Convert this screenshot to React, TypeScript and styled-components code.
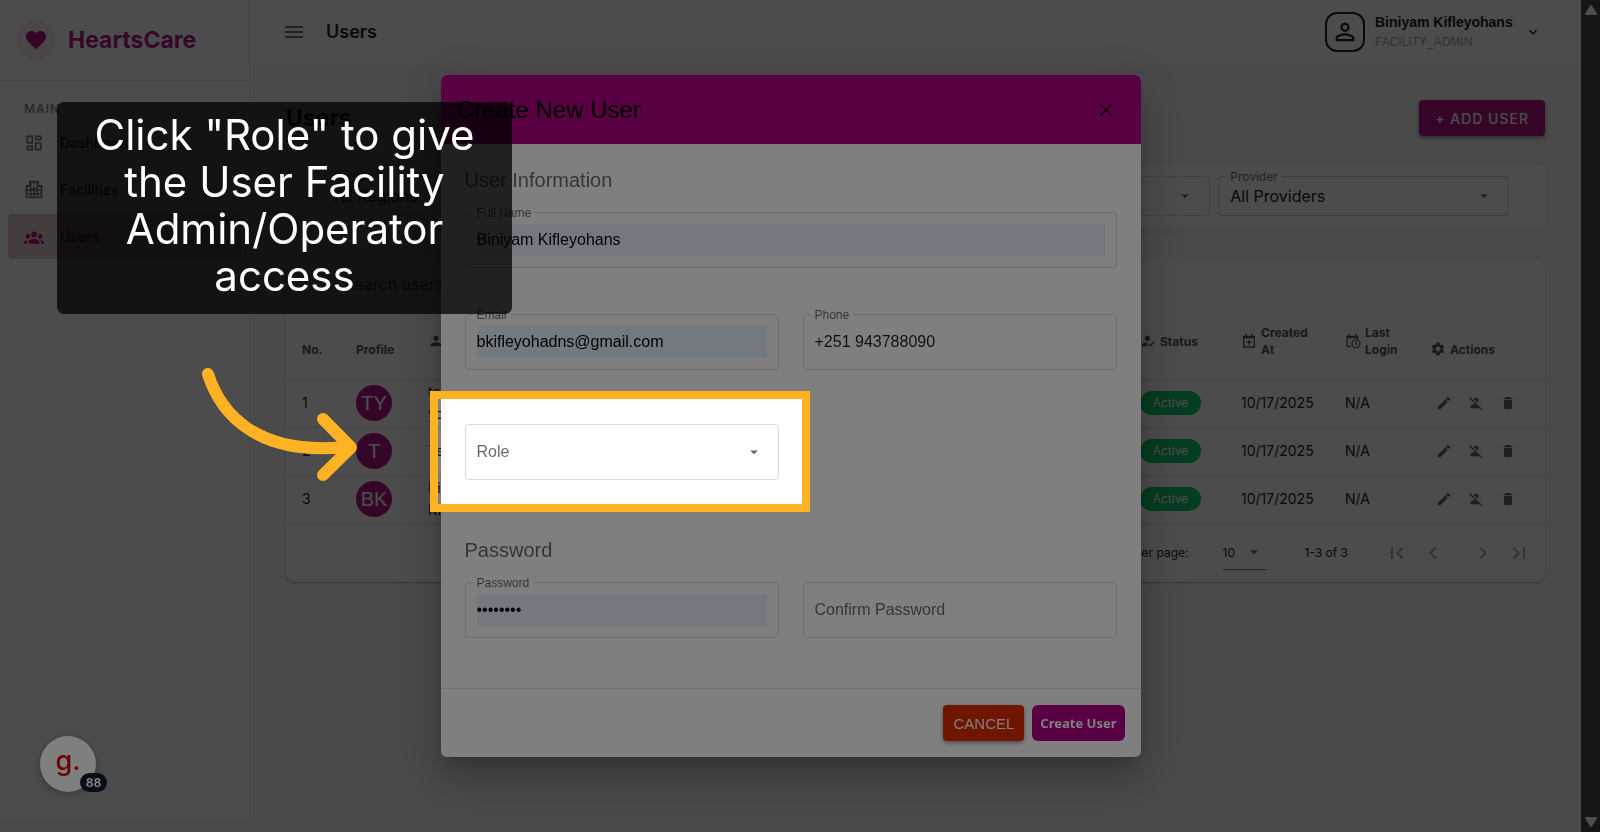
import React from "react";
import styled, { createGlobalStyle } from "styled-components";
import {
  MdArrowDropDown,
  MdChevronLeft,
  MdChevronRight,
  MdDelete,
  MdEdit,
  MdFavorite,
  MdFirstPage,
  MdHowToReg,
  MdKeyboardArrowDown,
  MdLastPage,
  MdMenu,
  MdOutlineDashboard,
  MdPerson,
  MdPersonOff,
  MdPersonOutline,
  MdSettings,
} from "react-icons/md";

const brand = "#b5178a";
const accent = "#b20084";
const tour = "#ffb224";
const ui = `Inter, "Open Sans", sans-serif`;
const arial = `"Liberation Sans", Arial, sans-serif`;

const Global = createGlobalStyle`
  *, *::before, *::after { box-sizing: border-box; }
  body { margin: 0; background: #f8f8f8; font-family: ${ui}; color: #222; overflow: hidden; }
  button, input, select { font: inherit; color: inherit; border: 0; background: none; padding: 0; margin: 0; outline: 0; }
  h1, h2, h3, p { margin: 0; }
`;

/* ---------- page frame ---------- */

const Shell = styled.div`
  display: flex;
  height: 100vh;
`;

const Sidebar = styled.aside`
  flex: none;
  width: 250px;
  margin-bottom: 12px;
  background: #fff;
  border-right: 1px solid #e4e4e4;
`;

const Brand = styled.div`
  display: flex;
  align-items: center;
  gap: 12px;
  height: 81px;
  padding: 0 16px;
  border-bottom: 1px solid #e4e4e4;
  color: ${brand};
  font-size: 23px;
  font-weight: 700;
`;

const BrandMark = styled.span`
  display: grid;
  place-items: center;
  width: 40px;
  height: 40px;
  border-radius: 50%;
  background: #f8e6ea;
`;

const NavTitle = styled.h2`
  padding: 20px 24px 3px;
  font-size: 12px;
  line-height: 16px;
  font-weight: 600;
  letter-spacing: 1px;
  color: #8a8a8a;
`;

const Nav = styled.nav`
  display: flex;
  flex-direction: column;
  gap: 2px;
  padding: 0 8px;
`;

const NavLink = styled.a<{ $active?: boolean }>`
  display: flex;
  align-items: center;
  gap: 16px;
  height: 45px;
  padding: 0 16px;
  border-radius: 4px;
  font-size: 14px;
  font-weight: ${(p) => (p.$active ? 600 : 500)};
  text-decoration: none;
  color: ${(p) => (p.$active ? brand : "#333")};
  background: ${(p) => (p.$active ? "#e3cbd0" : "transparent")};
  svg { flex: none; width: 20px; height: 20px; color: ${(p) => (p.$active ? brand : "#777")}; }
`;

const Main = styled.main`
  flex: 1;
  min-width: 0;
`;

const TopBar = styled.header`
  display: flex;
  align-items: center;
  height: 65px;
  padding: 0 40px 2px 32px;
  background: #fff;
`;

const IconButton = styled.button`
  display: inline-grid;
  place-items: center;
  color: inherit;
`;

const TopTitle = styled.p`
  flex: 1;
  padding-left: 20px;
  font-size: 18px;
  font-weight: 600;
`;

const Account = styled.button`
  display: flex;
  align-items: center;
  text-align: left;
  font-family: ${arial};
`;

const AccountFrame = styled.span`
  display: grid;
  place-items: center;
  width: 40px;
  height: 40px;
  margin-right: 10px;
  border: 2px solid #222;
  border-radius: 12px;
`;

const AccountText = styled.span`
  display: flex;
  flex-direction: column;
  width: 150px;
  font-size: 12px;
  line-height: 20px;
  color: #a8a8a8;
  strong { font-size: 14px; color: #222; }
`;

const Scrollbar = styled.div`
  flex: none;
  display: flex;
  flex-direction: column;
  justify-content: space-between;
  align-items: center;
  width: 19px;
  padding: 5px 0;
  background: #2c2c2c;
`;

/* ---------- users page ---------- */

const Content = styled.div`
  padding: 35px 36px 0;
`;

const PageHead = styled.div`
  display: flex;
  align-items: center;
  justify-content: space-between;
  h1 { font-size: 23px; font-weight: 700; }
`;

const AddButton = styled.button`
  height: 36px;
  padding: 0 16px;
  border-radius: 4px;
  background: ${brand};
  color: #fff;
  font-size: 14px;
  font-weight: 500;
  letter-spacing: 1px;
  box-shadow: 0 2px 4px rgba(0, 0, 0, 0.4);
`;

const Filters = styled.section`
  display: grid;
  grid-template-columns: repeat(4, 1fr);
  gap: 8px;
  margin-top: 28px;
  padding: 12px 36px;
  border-radius: 8px;
  background: #fff;
  box-shadow: 0 2px 10px rgba(0, 0, 0, 0.06);
`;

const Outline = styled.div<{ $h: number }>`
  position: relative;
  display: flex;
  align-items: center;
  height: ${(p) => p.$h}px;
  padding: 0 11px;
  border: 1px solid rgba(0, 0, 0, 0.14);
  border-radius: 4px;
  > svg { flex: none; margin-right: 4px; color: #666; }
`;

const FloatLabel = styled.label`
  position: absolute;
  top: -8px;
  left: 7px;
  padding: 0 4px;
  background: #fff;
  font-size: 12px;
  line-height: 16px;
  color: rgba(0, 0, 0, 0.6);
`;

const Select = styled.select<{ $muted?: boolean }>`
  appearance: none;
  flex: 1;
  min-width: 0;
  font-size: 16px;
  line-height: 24px;
  color: ${(p) => (p.$muted ? "rgba(0, 0, 0, 0.6)" : "#222")};
`;

const Card = styled.section`
  margin-top: 32px;
  border-radius: 8px;
  background: #fff;
  box-shadow: 0 1px 2px rgba(0, 0, 0, 0.3);
`;

const Search = styled.input`
  display: block;
  width: 100%;
  height: 60px;
  padding: 0 58px 12px;
  font-size: 16px;
  &::placeholder { color: #555; opacity: 1; }
`;

const Table = styled.table`
  width: 100%;
  table-layout: fixed;
  border-collapse: collapse;
  font-size: 14px;
  line-height: 22px;
`;

const Th = styled.th<{ $w?: number; $sortable?: boolean }>`
  width: ${(p) => (p.$w ? `${p.$w}px` : "auto")};
  height: 59px;
  padding: 0 0 ${(p) => (p.$sortable ? 16 : 0)}px 16px;
  border-bottom: 1px solid #e2e2e2;
  text-align: left;
  font-size: 12px;
  line-height: 17px;
  font-weight: 700;
  color: #555;
  > span { display: flex; align-items: center; gap: 4px; }
  svg { flex: none; }
`;

const Td = styled.td`
  height: 48px;
  padding: 0 0 0 16px;
  border-bottom: 1px solid #e2e2e2;
`;

const Avatar = styled.span`
  display: grid;
  place-items: center;
  width: 36px;
  height: 36px;
  border-radius: 50%;
  background: ${brand};
  color: #fff;
  font-family: ${arial};
  font-size: 20px;
`;

const Chip = styled.span`
  display: block;
  width: 61px;
  height: 24px;
  border-radius: 12px;
  background: #10cc72;
  color: #fff;
  font-size: 12px;
  line-height: 24px;
  text-align: center;
`;

const RowActions = styled.span`
  display: flex;
  gap: 16px;
  padding-left: 6px;
  color: #666;
`;

const Pager = styled.footer`
  display: flex;
  align-items: center;
  justify-content: flex-end;
  height: 58px;
  padding-right: 14px;
  font-size: 12px;
  label { margin-right: 34px; }
`;

const PageSize = styled.span`
  display: flex;
  align-items: center;
  width: 44px;
  height: 34px;
  margin-right: 38px;
  padding-right: 4px;
  border-bottom: 1px solid #888;
  select { appearance: none; flex: 1; min-width: 0; }
  svg { flex: none; color: #666; }
`;

const PagerButtons = styled.span`
  display: flex;
  gap: 12px;
  margin-left: 37px;
  color: #aaa;
  button:nth-child(3) { margin-left: 14px; }
`;

/* ---------- dialog ---------- */

const Backdrop = styled.div`
  position: fixed;
  inset: 0 19px 0 0;
  background: rgba(0, 0, 0, 0.4);
`;

const Modal = styled.div`
  position: fixed;
  inset: 0 19px 0 0;
  display: flex;
  align-items: center;
  justify-content: center;
  font-family: ${arial};
`;

const Dialog = styled.form`
  width: 700px;
  border-radius: 6px;
  background: #fff;
  box-shadow: 0 11px 15px -7px rgba(0, 0, 0, 0.2), 0 24px 38px 3px rgba(0, 0, 0, 0.14),
    0 9px 46px 8px rgba(0, 0, 0, 0.12);
`;

const DialogHead = styled.header`
  display: flex;
  align-items: center;
  justify-content: space-between;
  height: 69px;
  padding: 0 28px 0 16px;
  border-radius: 6px 6px 0 0;
  background: ${accent};
  h2 { font-size: 24px; font-weight: 400; color: #000; }
`;

const DialogBody = styled.div`
  display: grid;
  grid-template-columns: 1fr 1fr;
  column-gap: 24px;
  padding: 23px 24px 50px;
`;

const SectionTitle = styled.h3`
  grid-column: 1 / -1;
  margin-bottom: 19px;
  font-size: 20px;
  line-height: 26px;
  font-weight: 400;
  color: rgba(0, 0, 0, 0.6);
`;

const Cell = styled.div<{ $wide?: boolean; $after?: number }>`
  position: relative;
  grid-column: ${(p) => (p.$wide ? "1 / -1" : "auto")};
  margin-bottom: ${(p) => p.$after ?? 0}px;
`;

const TextInput = styled.input<{ $filled?: boolean }>`
  flex: 1;
  min-width: 0;
  height: 32px;
  font-size: 16px;
  color: ${(p) => (p.$filled ? "#000" : "rgba(0, 0, 0, 0.87)")};
  background: ${(p) => (p.$filled ? "#e8f0fe" : "transparent")};
  &::placeholder { color: rgba(0, 0, 0, 0.6); opacity: 1; }
`;

const DialogFoot = styled.footer`
  display: flex;
  align-items: center;
  justify-content: flex-end;
  gap: 8px;
  height: 69px;
  padding: 0 16px;
  border-top: 1px solid #dedede;
`;

const CancelButton = styled.button`
  height: 36px;
  padding: 0 10px;
  border-radius: 4px;
  background: #e02d00;
  color: #fff;
  font-size: 15px;
  box-shadow: 0 2px 4px rgba(0, 0, 0, 0.4);
`;

const SubmitButton = styled.button`
  height: 36px;
  padding: 0 8px;
  border-radius: 6px;
  background: ${accent};
  color: #fff;
  font-family: "Noto Sans", sans-serif;
  font-size: 13px;
  font-weight: 700;
`;

/* ---------- guide overlay ---------- */

const Spotlight = styled.div`
  position: absolute;
  z-index: 5;
  inset: -33px -31px -32px -35px;
  border: 8px solid ${tour};
  box-shadow: 0 0 0 4000px rgba(0, 0, 0, 0.5);
  pointer-events: none;
`;

const Tooltip = styled.p`
  position: fixed;
  top: 102px;
  left: 57px;
  width: 455px;
  padding: 9px 32px 15px;
  border-radius: 7px;
  background: rgba(0, 0, 0, 0.74);
  color: #fff;
  font-size: 42px;
  line-height: 47px;
  text-align: center;
`;

const Arrow = styled.svg`
  position: fixed;
  top: 360px;
  left: 195px;
`;

const Launcher = styled.button`
  position: fixed;
  left: 40px;
  bottom: 40px;
  width: 56px;
  height: 56px;
  padding-bottom: 6px;
  border-radius: 50%;
  background: #fff;
  color: #d40000;
  font-size: 27px;
  line-height: 44px;
  font-weight: 500;
  box-shadow: 0 2px 8px rgba(0, 0, 0, 0.3);
`;

const Count = styled.span`
  position: absolute;
  top: 37px;
  left: 40px;
  width: 27px;
  height: 19px;
  border-radius: 10px;
  background: #101c30;
  color: #fff;
  font-size: 12px;
  line-height: 19px;
  font-weight: 700;
`;

/* ---------- icons ---------- */

const HospitalIcon = () => (
  <svg viewBox="0 0 24 24" fill="currentColor" fillRule="evenodd">
    <path d="M2 22V6h4V1h12v5h4v16H2ZM9 3v7h2V7.500h2V10h2V3h-2v2.500h-2V3H9ZM4 8.500V11h3V8.500H4Zm13 0V11h3V8.500h-3ZM4 13v2.500h3V13H4Zm5 0v2.500h2V13H9Zm4 0v2.500h2V13h-2Zm4 0v2.500h3V13h-3ZM4 17.500V20h3v-2.500H4Zm5 0V20h2v-2.500H9Zm4 0V20h2v-2.500h-2Zm4 0V20h3v-2.500h-3Z" />
  </svg>
);

const GroupIcon = () => (
  <svg viewBox="0 0 24 24" fill="currentColor">
    <path d="M12,5.500A3.500,3.500 0 0,1 15.500,9A3.500,3.500 0 0,1 12,12.500A3.500,3.500 0 0,1 8.500,9A3.500,3.500 0 0,1 12,5.500M5,8C5.560,8 6.080,8.150 6.530,8.420C6.380,9.850 6.800,11.270 7.660,12.380C7.160,13.340 6.160,14 5,14A3,3 0 0,1 2,11A3,3 0 0,1 5,8M19,8A3,3 0 0,1 22,11A3,3 0 0,1 19,14C17.840,14 16.840,13.340 16.340,12.380C17.200,11.270 17.620,9.850 17.470,8.420C17.920,8.150 18.440,8 19,8M5.500,18.250C5.500,16.180 8.410,14.500 12,14.500C15.590,14.500 18.500,16.180 18.500,18.250V20H5.500V18.250M0,20V18.500C0,17.110 1.890,15.940 4.450,15.600C3.860,16.280 3.500,17.220 3.500,18.250V20H0M24,20H20.500V18.250C20.500,17.220 20.140,16.280 19.550,15.600C22.110,15.940 24,17.110 24,18.500V20Z" />
  </svg>
);

const CalendarPlusIcon = () => (
  <svg width="16" height="16" viewBox="0 0 24 24" fill="none" stroke="currentColor" strokeWidth="2">
    <path d="M4 5h16v16H4zM7.500 1v4M16.500 1v4M12 10v8M8 14h8" />
    <path d="M4 6.500h16" strokeWidth="3" />
  </svg>
);

const CalendarClockIcon = () => (
  <svg width="16" height="16" viewBox="0 0 24 24" fill="none" stroke="currentColor" strokeWidth="2">
    <path d="M9 20H3V5h16v4M6 1v4M16 1v4" />
    <path d="M3 6.500h16" strokeWidth="3" />
    <circle cx="16.500" cy="16" r="6" />
    <path d="M16.500 12.500V16l2.500 1.500" />
  </svg>
);

const CloseIcon = () => (
  <svg width="14" height="14" viewBox="0 0 14 14" fill="none" stroke="#111" strokeWidth="1.500">
    <path d="M1 1l12 12M13 1L1 13" />
  </svg>
);

const ScrollArrow = ({ down }: { down?: boolean }) => (
  <svg width="12" height="10" viewBox="0 0 12 10" fill="#9c9c9c" stroke="#9c9c9c" strokeWidth="2" strokeLinejoin="round">
    <path d={down ? "M1 1h10L6 9z" : "M1 9h10L6 1z"} />
  </svg>
);

/* ---------- data ---------- */

const users = [
  { initials: "TY", name: "test yohannes" },
  { initials: "T", name: "Test" },
  { initials: "BK", name: "Biniyam Kifleyohans" },
];

type FieldProps = { id: string; label: string; value: string; type?: string; filled?: boolean };

const Field = ({ id, label, value, type = "text", filled }: FieldProps) => (
  <Outline $h={56}>
    <FloatLabel htmlFor={id}>{label}</FloatLabel>
    <TextInput id={id} type={type} defaultValue={value} $filled={filled} />
  </Outline>
);

const Filter = ({ id, label, value }: { id: string; label?: string; value?: string }) => (
  <Outline $h={40}>
    {label && <FloatLabel htmlFor={id}>{label}</FloatLabel>}
    <Select id={id} aria-label={label ?? id}>
      <option>{value}</option>
    </Select>
    <MdArrowDropDown size={18} />
  </Outline>
);

export default function App() {
  return (
    <>
      <Global />
      <Shell>
        <Sidebar>
          <Brand>
            <BrandMark>
              <MdFavorite size={24} />
            </BrandMark>
            HeartsCare
          </Brand>
          <NavTitle>MAIN</NavTitle>
          <Nav>
            <NavLink href="#dashboard">
              <MdOutlineDashboard />
              Dashboard
            </NavLink>
            <NavLink href="#facilities">
              <HospitalIcon />
              Facilities
            </NavLink>
            <NavLink href="#users" $active>
              <GroupIcon />
              Users
            </NavLink>
          </Nav>
        </Sidebar>

        <Main>
          <TopBar>
            <IconButton aria-label="Toggle menu">
              <MdMenu size={24} color="#777" />
            </IconButton>
            <TopTitle>Users</TopTitle>
            <Account>
              <AccountFrame>
                <MdPersonOutline size={28} />
              </AccountFrame>
              <AccountText>
                <strong>Biniyam Kifleyohans</strong>
                FACILITY_ADMIN
              </AccountText>
              <MdKeyboardArrowDown size={16} />
            </Account>
          </TopBar>

          <Content>
            <PageHead>
              <h1>Users</h1>
              <AddButton>+ ADD USER</AddButton>
            </PageHead>

            <Filters>
              <Filter id="region" label="Region" value="All Regions" />
              <Filter id="zone" />
              <Filter id="facility" />
              <Filter id="provider" label="Provider" value="All Providers" />
            </Filters>

            <Card>
              <Search aria-label="Search users" placeholder="Search users..." />
              <Table>
                <thead>
                  <tr>
                    <Th $w={54}>No.</Th>
                    <Th $w={72}>Profile</Th>
                    <Th $w={90} $sortable>
                      <span>
                        <MdPerson size={16} aria-label="Name" />
                      </span>
                    </Th>
                    <Th />
                    <Th $w={101} $sortable>
                      <span>
                        <MdHowToReg size={16} />
                        Status
                      </span>
                    </Th>
                    <Th $w={104} $sortable>
                      <span>
                        <CalendarPlusIcon />
                        Created
                        <br />
                        At
                      </span>
                    </Th>
                    <Th $w={85} $sortable>
                      <span>
                        <CalendarClockIcon />
                        Last
                        <br />
                        Login
                      </span>
                    </Th>
                    <Th $w={131}>
                      <span>
                        <MdSettings size={16} />
                        Actions
                      </span>
                    </Th>
                  </tr>
                </thead>
                <tbody>
                  {users.map((u, i) => (
                    <tr key={u.initials}>
                      <Td>{i + 1}</Td>
                      <Td>
                        <Avatar>{u.initials}</Avatar>
                      </Td>
                      <Td>{u.name}</Td>
                      <Td />
                      <Td>
                        <Chip>Active</Chip>
                      </Td>
                      <Td>10/17/2025</Td>
                      <Td>N/A</Td>
                      <Td>
                        <RowActions>
                          <IconButton aria-label="Edit">
                            <MdEdit size={16} />
                          </IconButton>
                          <IconButton aria-label="Deactivate">
                            <MdPersonOff size={16} />
                          </IconButton>
                          <IconButton aria-label="Delete">
                            <MdDelete size={16} />
                          </IconButton>
                        </RowActions>
                      </Td>
                    </tr>
                  ))}
                </tbody>
              </Table>
              <Pager>
                <label htmlFor="page-size">Rows per page:</label>
                <PageSize>
                  <select id="page-size">
                    <option>10</option>
                  </select>
                  <MdArrowDropDown size={18} />
                </PageSize>
                1-3 of 3
                <PagerButtons>
                  <IconButton aria-label="First page">
                    <MdFirstPage size={24} />
                  </IconButton>
                  <IconButton aria-label="Previous page">
                    <MdChevronLeft size={24} />
                  </IconButton>
                  <IconButton aria-label="Next page">
                    <MdChevronRight size={24} />
                  </IconButton>
                  <IconButton aria-label="Last page">
                    <MdLastPage size={24} />
                  </IconButton>
                </PagerButtons>
              </Pager>
            </Card>
          </Content>
        </Main>

        <Scrollbar aria-hidden>
          <ScrollArrow />
          <ScrollArrow down />
        </Scrollbar>
      </Shell>

      <Backdrop />

      <Launcher>
        g.
        <Count>88</Count>
      </Launcher>

      <Modal role="dialog" aria-label="Create New User">
        <Dialog>
          <DialogHead>
            <h2>Create New User</h2>
            <IconButton type="button" aria-label="Close">
              <CloseIcon />
            </IconButton>
          </DialogHead>
          <DialogBody>
            <SectionTitle>User Information</SectionTitle>
            <Cell $wide $after={46}>
              <Field id="name" label="Full Name" value="Biniyam Kifleyohans" filled />
            </Cell>
            <Cell $after={54}>
              <Field id="email" label="Email" value="bkifleyohadns@gmail.com" filled />
            </Cell>
            <Cell $after={54}>
              <Field id="phone" label="Phone" value="+251 943788090" />
            </Cell>
            <Cell>
              <Outline $h={56}>
                <Select aria-label="Role" $muted>
                  <option>Role</option>
                </Select>
                <MdArrowDropDown size={18} />
              </Outline>
              <Spotlight />
            </Cell>
            <Cell $wide $after={57} />
            <SectionTitle>Password</SectionTitle>
            <Cell>
              <Field id="password" label="Password" type="password" value="12345678" filled />
            </Cell>
            <Cell>
              <Outline $h={56}>
                <TextInput type="password" aria-label="Confirm Password" placeholder="Confirm Password" />
              </Outline>
            </Cell>
          </DialogBody>
          <DialogFoot>
            <CancelButton type="button">CANCEL</CancelButton>
            <SubmitButton type="button">Create User</SubmitButton>
          </DialogFoot>
        </Dialog>
      </Modal>

      <Arrow width="170" height="130" viewBox="195 360 170 130" fill="none" stroke={tour} strokeWidth="12" strokeLinecap="round" strokeLinejoin="round">
        <path d="M208 374C220 412 255 456 345 447M323 419L351 447.500L323 475" />
      </Arrow>

      <Tooltip role="tooltip">Click "Role" to give the User Facility Admin/Operator access</Tooltip>
    </>
  );
}
